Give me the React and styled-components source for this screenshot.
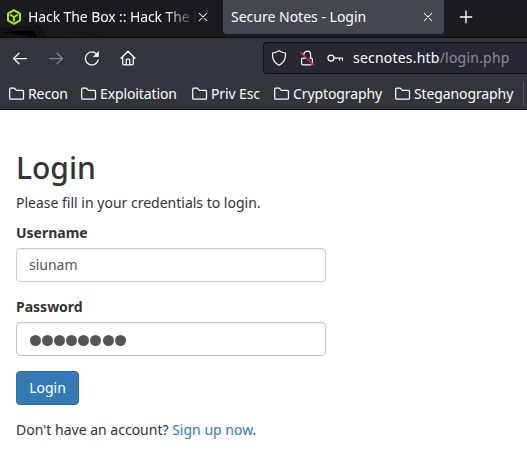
import React from "react";
import styled, { createGlobalStyle, css } from "styled-components";

const Global = createGlobalStyle`
  *, *::before, *::after { box-sizing: border-box; }
  html, body { margin: 0; padding: 0; background: #fff; overflow: hidden; }
  body { font: 14px/20px "Noto Sans", sans-serif; color: #333; }
`;

const Window = styled.div`
  width: 527px;
  height: 459px;
  overflow: hidden;
  background: #fff;
`;

const Chrome = styled.header`
  color: #fbfbfe;
  white-space: nowrap;
`;

const TabStrip = styled.div`
  position: relative;
  display: flex;
  align-items: flex-start;
  height: 38px;
  background: #1a1b20;
  border-bottom: 1px solid #0c0c10;
  overflow: hidden;
`;

const ThemeArt = styled.svg`
  position: absolute;
  left: 0;
  top: 0;
`;

const Tab = styled.div`
  position: relative;
  display: flex;
  align-items: center;
  width: ${(p) => p.$width}px;
  height: 34px;
  padding: 0 ${(p) => (p.$active ? 10 : 14)}px 0 ${(p) => p.$inset}px;
  ${(p) =>
    p.$active &&
    css`
      background: #44474f;
      border-radius: 0 0 4px 4px;
    `}
`;

const TabTitle = styled.span`
  flex: 1;
  min-width: 0;
  margin-left: ${(p) => (p.$afterIcon ? 6 : 0)}px;
  overflow: hidden;
  ${(p) =>
    p.$fade &&
    css`
      letter-spacing: -0.1px;
      mask-image: linear-gradient(to left, transparent, #000 32px);
    `}
`;

const NewTab = styled.div`
  position: relative;
  display: flex;
  align-items: center;
  height: 34px;
  padding-left: 15px;
`;

const Toolbar = styled.div`
  display: flex;
  align-items: center;
  height: 40px;
  background: #33353d;
  padding-left: 12px;
`;

const NavButtons = styled.nav`
  display: flex;
  gap: 20px;
  width: 251px;
`;

const AddressBar = styled.div`
  display: flex;
  align-items: center;
  flex: 1;
  height: 32px;
  padding-left: 7px;
  gap: 12px;
  background: #272833;
  border: 1px solid #101116;
  border-right: 0;
  border-radius: 4px 0 0 4px;
`;

const Url = styled.span`
  margin-left: -2px;
  letter-spacing: 0.21px;
`;

const Path = styled.span`
  color: #8b8c95;
`;

const Bookmarks = styled.div`
  display: flex;
  align-items: center;
  height: 32px;
  padding: 0 0 0 9px;
  background: #33353d;
  border-bottom: 1px solid #101116;
`;

const Bookmark = styled.div`
  display: flex;
  align-items: center;
  gap: 3px;
  width: ${(p) => p.$width}px;
  flex: none;
  letter-spacing: -0.11px;
`;

const Divider = styled.i`
  width: 1px;
  height: 24px;
  background: #55575e;
`;

const Page = styled.main`
  width: 326px;
  padding: 41px 0 0 16px;
`;

const Heading = styled.h2`
  margin: 0 0 9px;
  font-size: 30px;
  font-weight: 500;
  line-height: 33px;
`;

const Text = styled.p`
  margin: 0 0 10px;
`;

const Field = styled.div`
  margin-bottom: 15px;
`;

const Label = styled.label`
  display: block;
  margin-bottom: 5px;
  font-weight: 700;
`;

const Input = styled.div`
  display: flex;
  align-items: center;
  height: 34px;
  padding: 0 12px;
  border: 1px solid ${(p) => (p.$tinted ? "#bcc6cf" : "#ccc")};
  border-radius: 4px;
  color: #555;
  box-shadow: inset 0 1px 1px rgba(0, 0, 0, 0.075);
`;

const Dots = styled.div`
  display: flex;
  gap: 1.2px;
  padding: 2px 0 0 0.5px;
`;

const Dot = styled.i`
  width: 11px;
  height: 11px;
  border-radius: 50%;
  background: #555;
`;

const Submit = styled.button`
  display: block;
  width: 63px;
  height: 34px;
  margin: 0 0 15px;
  padding: 0;
  border: 1px solid #2e6da4;
  border-radius: 4px;
  background: #337ab7;
  color: #fff;
  font: inherit;
`;

const Link = styled.a`
  color: #337ab7;
`;

const Icon = ({ size = 16, children, ...rest }) => (
  <svg width={size} height={size} viewBox="0 0 16 16" fill="none" stroke="#fbfbfe"
    strokeWidth="1.25" strokeLinecap="round" strokeLinejoin="round" {...rest}>
    {children}
  </svg>
);

const Cube = () => (
  <Icon stroke="#9fef00" strokeWidth="2">
    <path d="M8 1.2 14 4.6V11.4L8 14.8 2 11.4V4.6ZM4.6 6 8 8 11.4 6M8 8v3.5" />
  </Icon>
);

const Close = () => (
  <Icon size={12} strokeWidth="1.4">
    <path d="m3 3 10 10M13 3 3 13" />
  </Icon>
);

const Folder = () => (
  <Icon>
    <path d="M.7 12.2V3.2q0-1 1-1h3.6L7.5 4.4h6q1 0 1 1v6.8q0 1-1 1H1.7q-1 0-1-1Z" />
  </Icon>
);

const bookmarks = [
  ["Recon", 72],
  ["Exploitation", 111],
  ["Priv Esc", 82],
  ["Cryptography", 121],
  ["Steganography", 128],
];

export default function App() {
  return (
    <Window>
      <Global />
      <Chrome>
        <TabStrip>
          <ThemeArt width="220" height="38">
            <path d="M0 28Q20 25 39 25L49 38H0Z" fill="#121317" />
            <path d="M0 32Q18 29 34 30L39 38" stroke="#1c1d22" />
            <path d="M66 32Q90 31 112 38H97Q82 33 66 32Z" fill="#141519" />
          </ThemeArt>
          <Tab $width={223} $inset={6}>
            <Cube />
            <TabTitle $afterIcon $fade>Hack The Box :: Hack The Box</TabTitle>
            <Close />
          </Tab>
          <Tab $width={221} $inset={8} $active>
            <TabTitle>Secure Notes - Login</TabTitle>
            <Close />
          </Tab>
          <NewTab>
            <Icon size={14} strokeWidth="1.6"><path d="M8 1.5v13M1.5 8h13" /></Icon>
          </NewTab>
        </TabStrip>
        <Toolbar>
          <NavButtons>
            <Icon><path d="M14.5 8.5H1.5M7 3.2 1.5 8.5 7 13.8" /></Icon>
            <Icon opacity="0.4"><path d="M1.5 8.5h13M9 3.2l5.5 5.3L9 13.8" /></Icon>
            <Icon>
              <path d="M14.2 10A6.5 6.5 0 1 1 12.8 4.2" />
              <path d="M14.4 2v4.6H9.8Z" fill="#fbfbfe" strokeWidth=".8" />
            </Icon>
            <Icon><path d="M1 8.3 8 1.3l7 7M2.7 7.2v6.3q0 1.3 1.3 1.3h8q1.3 0 1.3-1.3V7.2M6.2 14.5V10q0-1 1-1h1.6q1 0 1 1v4.5" /></Icon>
          </NavButtons>
          <AddressBar>
            <Icon><path d="M8 .8q3 2 6.4 2.2V6q-.3 6-6.4 9.2Q1.9 12 1.6 6V3Q5 2.8 8 .8Z" /></Icon>
            <Icon>
              <path d="M4.8 4.8a3.4 3.4 0 0 1 6.8-.3V8M11 8h1.2q1.2 0 1.2 1.2v3.3M12 14.8H3.8q-1.2 0-1.2-1.2V9.2Q2.6 8 3.8 8H7" />
              <path d="m1.5 2.5 13 12.3" stroke="#e22850" strokeWidth="1.5" />
            </Icon>
            <Icon><path d="M7 8a3 3 0 1 1-6 0 3 3 0 0 1 6 0h8.6v2.3M12.5 8v2" /></Icon>
            <Url>secnotes.htb<Path>/login.php</Path></Url>
          </AddressBar>
        </Toolbar>
        <Bookmarks>
          {bookmarks.map(([name, width]) => (
            <Bookmark key={name} $width={width}><Folder />{name}</Bookmark>
          ))}
          <Divider />
        </Bookmarks>
      </Chrome>
      <Page>
        <Heading>Login</Heading>
        <Text>Please fill in your credentials to login.</Text>
        <Field>
          <Label>Username</Label>
          <Input>siunam</Input>
        </Field>
        <Field>
          <Label>Password</Label>
          <Input $tinted>
            <Dots>{Array.from({ length: 8 }, (_, i) => <Dot key={i} />)}</Dots>
          </Input>
        </Field>
        <Submit>Login</Submit>
        <Text>Don't have an account? <Link>Sign up now</Link>.</Text>
      </Page>
    </Window>
  );
}
